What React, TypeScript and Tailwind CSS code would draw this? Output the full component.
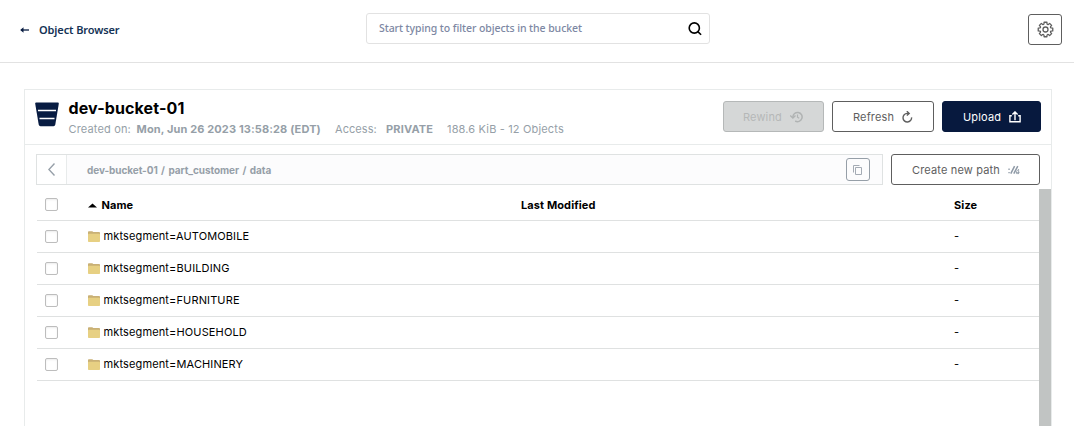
import React from "react";

const folders = [
  "mktsegment=AUTOMOBILE",
  "mktsegment=BUILDING",
  "mktsegment=FURNITURE",
  "mktsegment=HOUSEHOLD",
  "mktsegment=MACHINERY",
];

function GearIcon() {
  const gear = Array.from({ length: 8 }, (_, i) => {
    const point = (deg: number, r: number) => {
      const a = ((i * 45 + deg) * Math.PI) / 180;
      return `${(8.5 + r * Math.cos(a)).toFixed(2)} ${(8.5 + r * Math.sin(a)).toFixed(2)}`;
    };
    return `${i ? "L" : "M"}${point(-11, 7.4)} L${point(11, 7.4)} L${point(15, 5.9)} Q${point(22.5, 5)} ${point(30, 5.9)}`;
  }).join(" ");
  return (
    <svg width="17" height="17" viewBox="0 0 17 17" fill="none" stroke="#5e5e5e" strokeWidth="1.3" strokeLinejoin="round">
      <path d={gear + "Z"} />
      <circle cx="8.5" cy="8.5" r="2.5" />
    </svg>
  );
}

function BucketIcon() {
  return (
    <svg width="24" height="25" viewBox="0 0 24 25">
      <path d="M1.3 .5H22.7Q24 .5 23.8 1.8L20.3 22.6Q20 24.3 18.5 24.3H5.5Q4 24.3 3.7 22.6L.2 1.8Q0 .5 1.3 .5Z" fill="#081c42" />
      <path d="M3 8.5H21M4.5 16.5H19.5" stroke="#fff" strokeWidth="1.3" />
    </svg>
  );
}

function RewindIcon() {
  return (
    <svg width="13" height="12" viewBox="0 0 13 12" fill="none" stroke="#b0b3b3" strokeWidth="1.5">
      <path d="M2.9 6A4.6 4.6 0 1 1 5.2 10" />
      <path d="M7.5 3.4V6.2L9.2 7.3" strokeWidth="1.2" />
      <path d="M.2 4.6L2.9 7.1L5.5 4.6" strokeWidth="1.4" />
    </svg>
  );
}

function RefreshIcon() {
  return (
    <svg width="11" height="12" viewBox="0 0 11 12" fill="none" stroke="#5e5e5e" strokeWidth="1.4">
      <path d="M6.8 2.4H5.2A4.3 4.3 0 1 0 9.6 6.4" />
      <path d="M4.8 .2L7.2 2.4L4.8 4.6" />
    </svg>
  );
}

function UploadIcon() {
  return (
    <svg width="12" height="12" viewBox="0 0 12 12" fill="none" stroke="#fff" strokeWidth="1.4">
      <path d="M2.8 4.7H.9V10.8H11.1V4.7H9.2M6 9.2V1.2M3.4 3.5L6 .9L8.6 3.5" />
    </svg>
  );
}

function NewPathIcon() {
  return (
    <svg width="12" height="10" viewBox="0 0 12 10" fill="none" stroke="#8e99a6">
      <path d="M.4 4.2H1.7M.4 7.6H1.7" strokeWidth="1.4" />
      <path d="M2.8 8.6L6.6 1.1M5.8 8.6L9.8 1.1" strokeWidth="1.5" />
      <path d="M8.4 8.6V6.4L10.6 4.2V8.8M8 7.4H11.6M8.4 8.6H11" strokeWidth=".8" />
    </svg>
  );
}

function FolderIcon() {
  return (
    <svg width="12" height="11" viewBox="0 0 12 11" className="shrink-0">
      <path d="M0 1.2Q0 .3 .8 .3H4.3L5.3 1H11.2Q12 1 12 2V5H0Z" fill="#c9b075" />
      <rect y="2.8" width="12" height="8.2" rx=".8" fill="#e7d083" />
    </svg>
  );
}

function Checkbox() {
  return <span className="h-[13px] w-[13px] shrink-0 rounded-[2px] border border-[#bdbdbd] bg-white shadow-[inset_0_1px_2px_#ececec]" />;
}

export default function App() {
  return (
    <div className="h-[426px] w-[1074px] overflow-hidden bg-white font-['Inter',sans-serif] text-[11px] text-black">
      <header className="flex h-[63px] items-start border-b border-[#e2e2e2] font-['Noto_Sans',sans-serif]">
        <div className="flex h-[60px] w-[366px] items-center pl-5 text-[11px] font-semibold text-[#143255]">
          <svg width="9" height="8" viewBox="0 0 9 8" fill="none" className="mr-[10px] mb-px">
            <path d="M1.5 4H9" stroke="#081c42" strokeWidth="1.3" />
            <path d="M3.5 1.2V6.8L.2 4Z" fill="#081c42" />
          </svg>
          <span className="whitespace-nowrap tracking-[-0.11px]">Object Browser</span>
        </div>
        <div className="mt-[13px] flex h-[31px] w-[344px] items-center justify-between rounded-[3px] border border-[#e2e2e2] pr-[7px] pl-3">
          <span className="whitespace-nowrap text-[10.5px] font-medium tracking-[-0.07px] text-[#7d88a3]">Start typing to filter objects in the bucket</span>
          <svg width="14" height="14" viewBox="0 0 14 14" fill="none" stroke="#000" strokeWidth="1.6">
            <circle cx="6.3" cy="6" r="5.1" />
            <path d="M9.8 9.6L13.1 12.8" />
          </svg>
        </div>
        <button className="mt-[14px] ml-[318px] flex h-[31px] w-[34px] items-center justify-center rounded-[3px] border border-[#5e5e5e]">
          <GearIcon />
        </button>
      </header>

      <main className="mt-[26px] ml-6 h-[340px] w-[1028px] border border-[#e8ebeb]">
        <section className="flex h-[55px] border-b border-[#e8ebeb] pl-[10px]">
          <div className="pt-[11.5px]"><BucketIcon /></div>
          <div className="ml-[9px] w-[655px] pt-2">
            <h1 className="h-[20px] whitespace-nowrap pl-[0.5px] text-[16px] leading-[20px] font-bold tracking-[0.12px]">dev-bucket-01</h1>
            <div className="mt-1 flex h-[15px] whitespace-nowrap pl-[0.5px] leading-[15px] tracking-[0.16px] text-[#969fa8]">
              <span className="w-[68px]">Created on:</span>
              <span className="w-[198.5px] font-bold tracking-[0.13px]">Mon, Jun 26 2023 13:58:28 (EDT)</span>
              <span className="w-[51px] tracking-[0.05px]">Access:</span>
              <span className="w-[61px] font-bold">PRIVATE</span>
              <span>188.6 KiB - 12 Objects</span>
            </div>
          </div>
          <div className="mt-[11px] flex h-[31px] gap-2">
            <button className="flex w-[101px] items-center rounded-[3px] border border-[#b5b8b8] bg-[#d5d7d7] pt-px pl-[19px] tracking-[0.15px] text-[#b5b8b8]"><span className="w-[47px] text-left">Rewind</span><span className="-mt-px"><RewindIcon /></span></button>
            <button className="flex w-[102px] items-center rounded-[3px] border border-[#5e5e5e] pt-px pl-[20px] tracking-[0.15px] text-[#5e5e5e]"><span className="w-[49px] text-left">Refresh</span><span className="-mt-px"><RefreshIcon /></span></button>
            <button className="flex w-[99px] items-center rounded-[3px] border border-[#07193e] bg-[#07193e] pt-px pl-[20px] tracking-[0.15px] text-white"><span className="w-[46px] text-left">Upload</span><span className="-mt-px"><UploadIcon /></span></button>
          </div>
        </section>

        <section className="flex h-[44px] pt-[9px] pl-[11px]">
          <div className="flex h-[31px] w-[847px] border border-[#dfe2e2] bg-[#fcfcfd]">
            <button className="flex w-[30px] items-center justify-center border-r border-[#e8ebeb] bg-white">
              <svg width="7" height="13" viewBox="0 0 7 13" fill="none" stroke="#969fa8" strokeWidth="1.4"><path d="M6.5 .6L.9 6.5L6.5 12.4" /></svg>
            </button>
            <span className="ml-5 w-[759px] self-center whitespace-nowrap pt-px text-[10px] font-bold [word-spacing:1.2px] tracking-[-0.07px] text-[#969fa8]">dev-bucket-01 / part_customer / data</span>
            <button className="flex h-[23px] w-[24px] shrink-0 items-center justify-center self-center rounded-[3px] border border-[#969fa8]">
              <svg width="9" height="10" viewBox="0 0 9 10" fill="none" stroke="#a4abb4" strokeWidth="1" className="-ml-px"><path d="M.5 7.5V.5H6.5M2.5 2.5H8.5V9.5H2.5Z" /></svg>
            </button>
          </div>
          <button className="ml-2 flex h-[31px] w-[149px] items-center rounded-[3px] border border-[#5e5e5e] pt-px pl-5 tracking-[0.15px] whitespace-nowrap text-[#5e5e5e]"><span className="w-[96px] text-left">Create new path</span><span className="-mt-px"><NewPathIcon /></span></button>
        </section>

        <section className="flex h-[239px] justify-between pl-3">
          <div className="w-[1002px]">
            <div className="flex h-[32px] items-center border-b border-[#dfe1e1] pl-2 text-[11px] font-bold tracking-[0.1px]">
              <Checkbox />
              <svg width="9" height="5" viewBox="0 0 9 5" className="mt-[2px] ml-[30px]"><path d="M0 4.5L4.5 .5L9 4.5Z" /></svg>
              <span className="mt-px ml-[4px] w-[420px] pl-[0.5px]">Name</span>
              <span className="mt-px w-[433px]">Last Modified</span>
              <span className="mt-px">Size</span>
            </div>
            {folders.map((name) => (
              <div key={name} className="flex h-[32px] items-center border-b border-[#dfe1e1] pl-2">
                <Checkbox />
                <span className="ml-[30px] flex w-[866px] items-center gap-[3.5px] whitespace-nowrap tracking-[0.13px]"><FolderIcon />{name}</span>
                <span>-</span>
              </div>
            ))}
          </div>
          <div className="w-3 bg-[#c1c4c3]" />
        </section>
      </main>
    </div>
  );
}
